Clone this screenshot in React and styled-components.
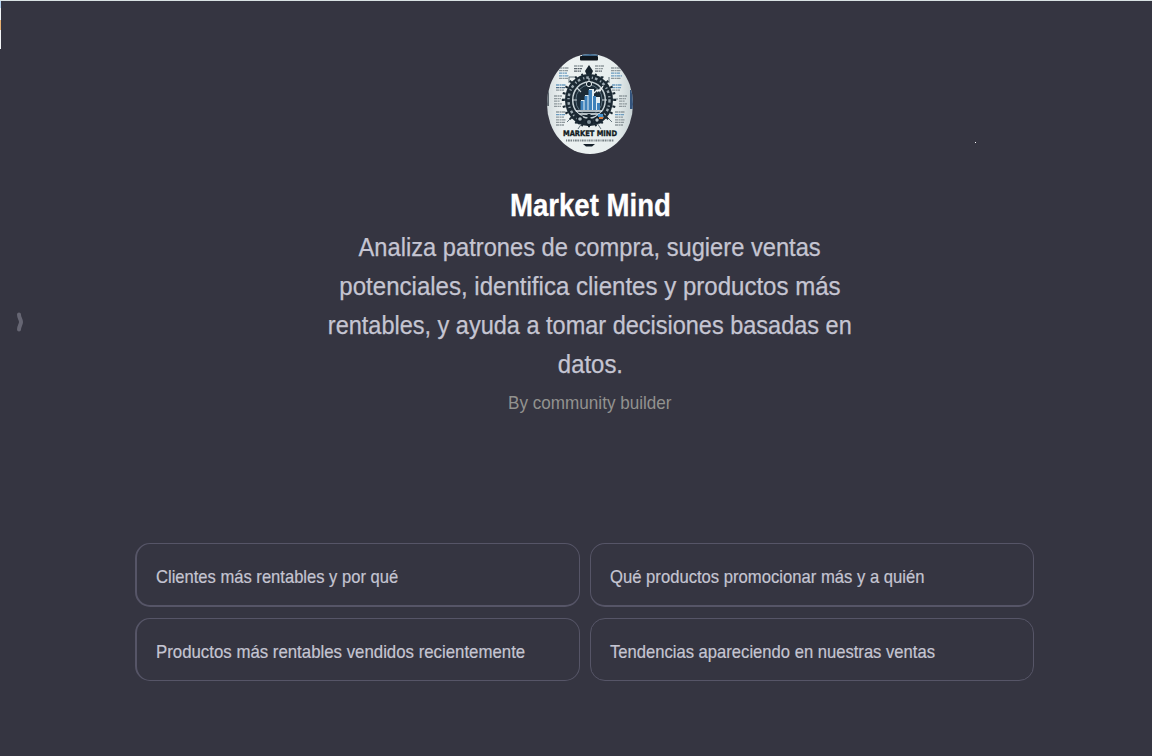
import React from "react";
import styled, { createGlobalStyle } from "styled-components";

const GlobalStyle = createGlobalStyle`
  html, body { margin: 0; height: 100%; background: #353541; }
  body { font-family: "Liberation Sans", Arial, sans-serif; overflow: hidden; }
  * { box-sizing: border-box; }
`;

const Page = styled.main`
  position: relative;
  width: 1152px;
  height: 756px;
  background: #353541;
  border-top: 1px solid #d9e2e3;
  display: flex;
  flex-direction: column;
`;

const EdgeStrip = styled.div`
  position: absolute;
  left: 0;
  top: 0;
  width: 1px;
  height: 48px;
  background: linear-gradient(#b5d3f2 0 7px, #f2f5f8 7px 19px, #e9b273 19px 29px, #f4f6f8 29px);
`;

const Speck = styled.i`
  position: absolute;
  left: 975px;
  top: 141px;
  width: 1px;
  height: 1px;
  background: #fff;
`;

const SidebarHandle = styled.svg`
  position: absolute;
  left: 14px;
  top: 309px;
  width: 12px;
  height: 24px;
`;

const Intro = styled.header`
  width: 600px;
  margin-left: 290px;
  padding-top: 53px;
  display: flex;
  flex-direction: column;
  align-items: center;
  text-align: center;
`;

const Avatar = styled.svg`
  display: block;
  width: 86px;
  height: 100px;
`;

const Fit = styled.span`
  display: block;
  width: max-content;
  white-space: nowrap;
  transform: scaleX(${(p) => p.$scale});
  transform-origin: ${(p) => p.$origin || "center"};
`;

const Title = styled.h1`
  margin: 28px 0 0;
  font-size: 31px;
  line-height: 47px;
  font-weight: 700;
  color: #fff;
  -webkit-text-stroke: 0.3px #fff;
`;

const Description = styled.div`
  display: flex;
  flex-direction: column;
  align-items: center;
  margin-top: -1px;
  font-size: 26px;
  line-height: 39px;
  color: #c5c5d2;
  -webkit-text-stroke: 0.25px #c5c5d2;
`;

const Author = styled.div`
  margin-top: 5px;
  font-size: 19px;
  line-height: 28px;
  color: #92928f;
`;

const Prompts = styled.div`
  display: grid;
  grid-template-columns: 445px 444px;
  grid-template-rows: 64px 63px;
  gap: 11px 10px;
  margin: 126px 0 0 135px;
`;

const Prompt = styled.button`
  display: flex;
  align-items: center;
  padding: 5px 18px 0 19px;
  border: 1px solid #565567;
  border-left-width: ${(p) => (p.$left ? 2 : 1)}px;
  border-bottom-width: ${(p) => (p.$upper ? 2 : 1)}px;
  border-radius: 15px;
  background: transparent;
  color: #c5c5d2;
  font: 19px "Liberation Sans", Arial, sans-serif;
  -webkit-text-stroke: 0.2px #c5c5d2;
`;

const lines = [
  ["Analiza patrones de compra, sugiere ventas", 0.911],
  ["potenciales, identifica clientes y productos más", 0.925],
  ["rentables, y ayuda a tomar decisiones basadas en", 0.904],
  ["datos.", 0.92],
];

const prompts = [
  ["Clientes más rentables y por qué", 0.872],
  ["Qué productos promocionar más y a quién", 0.876],
  ["Productos más rentables vendidos recientemente", 0.885],
  ["Tendencias apareciendo en nuestras ventas", 0.874],
];

const ring = Array.from({ length: 24 }, (_, i) => i * 15);

function Notes({ x, y, rows, w = 9 }) {
  return rows.map((c, i) => (
    <path key={i} d={`M${x} ${y + i * 2.6}h${w - (i % 3)}`} stroke={c} strokeWidth="1.3" strokeDasharray="3.2 .5 1.8 .4" />
  ));
}

function MarketMindLogo() {
  const g = "#8f999d";
  const b = "#6b9cc0";
  return (
    <Avatar viewBox="0 0 86 100" role="img" aria-label="Market Mind">
      <defs>
        <clipPath id="oval"><ellipse cx="43" cy="50" rx="43" ry="50" /></clipPath>
        <linearGradient id="paper" x1="0" x2="1">
          <stop offset="0" stopColor="#d5dddf" />
          <stop offset=".18" stopColor="#edf2f2" />
          <stop offset=".8" stopColor="#e7eeee" />
          <stop offset="1" stopColor="#c6d1d3" />
        </linearGradient>
      </defs>
      <g clipPath="url(#oval)" fill="none">
        <rect width="86" height="100" fill="url(#paper)" />
        <path d="M0 36h2v16H0z" fill="#59636b" />
        <path d="M83 36h3v19h-3z" fill="#34547d" />
        <rect x="35" y="0" width="16" height="2" fill="#41698c" />
        <rect x="33" y="2" width="18" height="4.5" rx="1" fill="#10171e" />
        <Notes x={12} y={14} rows={[g, g, b, b, g]} w={10} />
        <Notes x={27} y={12} rows={[g, "#59636b", "#59636b"]} w={9} />
        <Notes x={48} y={12} rows={[g, g, "#59636b"]} w={9} />
        <Notes x={64} y={14} rows={[g, g, b, b, g]} w={11} />
        <Notes x={9} y={31} rows={[b, "#54718a", g]} w={10} />
        <Notes x={65} y={31} rows={[b, b, g]} w={10} />
        <Notes x={7} y={42} rows={[g, g, g, g, g]} w={8} />
        <Notes x={72} y={42} rows={[g, g, g, g, g]} w={8} />
        <Notes x={9} y={58} rows={[g, b, g, g, g, g]} w={10} />
        <Notes x={68} y={58} rows={[g, b, g, g, g, g]} w={10} />
        <path d="M22 23h7l5 5M57 23h-7l-5 5M15 45h7M63 45h8M20 68l5-5M65 68l-5-5M31 75l4-6M54 75l-4-6M22 23v6M62 23v6" stroke="#65747c" />
        <path d="M42 11l4 6-4 9-4-9z" fill="#17232d" />
        <ellipse cx="42" cy="46" rx="24" ry="26" fill="#1b2933" />
        <ellipse cx="42" cy="46" rx="20.5" ry="22.5" stroke="#9eabb3" strokeWidth="2.4" strokeDasharray="2.6 3.1 1.2 2" />
        {ring.map((a) => (
          <rect key={a} x="41" y="18.8" width="2" height="3" fill="#1b2933" transform={`rotate(${a} 42 46)`} />
        ))}
        <ellipse cx="42" cy="46" rx="16.3" ry="18" fill="#1c2b36" stroke="#c5d0d5" strokeWidth="1.5" />
        <ellipse cx="42" cy="46" rx="13.2" ry="15" fill="#1b2b37" stroke="#6c818e" strokeWidth=".8" />
        <path d="M42 24v9M25 46h5M55 46h5M30 34l4 4M54 34l-4 4" stroke="#c9d4d8" strokeWidth="1.1" />
        <circle cx="42" cy="30" r="2.6" fill="#172530" stroke="#e4ebed" />
        <path d="M47 39l3-3 3 1 3-5" stroke="#f0f4f5" strokeWidth="1.4" />
        <path d="M34 46h4v-5h4v-6h5v8h6v13H34z" fill="#e1edf3" />
        <path d="M33.5 47h3v9h-3zM37.5 42h3v14h-3zM41.5 36h3.5v20h-3.5zM46 42h3v14h-3zM50 49h3v7h-3z" fill="#3f82bb" />
        <path d="M29 57h26M31 60h23" stroke="#dfe8ec" strokeWidth="1.3" />
        <path d="M28 59l6 5-3 6M56 59l-6 5 4 5M42 60v12M34 68h15" stroke="#1a2833" strokeWidth="3" />
        <circle cx="33" cy="65" r="2.6" fill="#aebcc2" stroke="#14212c" strokeWidth="1.6" />
        <circle cx="42" cy="68" r="2.9" fill="#80929b" stroke="#14212c" strokeWidth="1.8" />
        <circle cx="50" cy="66" r="2.4" fill="#b6c2c5" stroke="#14212c" strokeWidth="1.5" />
        <path d="M51 60h5v3h-5z" fill="#4694ce" />
        <path d="M52 63h4v2h-4z" fill="#d57b3c" />
        <text x="43" y="82.3" textAnchor="middle" textLength="54" lengthAdjust="spacingAndGlyphs" fill="#111a20" stroke="#111a20" strokeWidth=".35" fontFamily="DejaVu Sans" fontWeight="700" fontSize="7.6">MARKET MIND</text>
        <path d="M19 86.5h48" stroke="#788286" strokeWidth="1.9" strokeDasharray="1 .8 2 .7 1.5 .9" />
        <path d="M36 90h12l-3 2.5h-6z" fill="#15202a" />
      </g>
    </Avatar>
  );
}

export default function App() {
  return (
    <>
      <GlobalStyle />
      <Page>
        <EdgeStrip />
        <Speck />
        <SidebarHandle viewBox="0 0 12 24">
          <path d="M5 4.5C5 8 7 9.5 7 12s-2 4-2 7.5" fill="none" stroke="#666673" strokeWidth="4" strokeLinecap="round" />
        </SidebarHandle>
        <Intro>
          <MarketMindLogo />
          <Title><Fit $scale={0.89}>Market Mind</Fit></Title>
          <Description>
            {lines.map(([text, scale]) => <Fit key={text} $scale={scale}>{text}</Fit>)}
          </Description>
          <Author><Fit $scale={0.9}>By community builder</Fit></Author>
        </Intro>
        <Prompts>
          {prompts.map(([text, scale], i) => (
            <Prompt key={text} $left={i % 2 === 0} $upper={i < 2}>
              <Fit $scale={scale} $origin="left">{text}</Fit>
            </Prompt>
          ))}
        </Prompts>
      </Page>
    </>
  );
}
